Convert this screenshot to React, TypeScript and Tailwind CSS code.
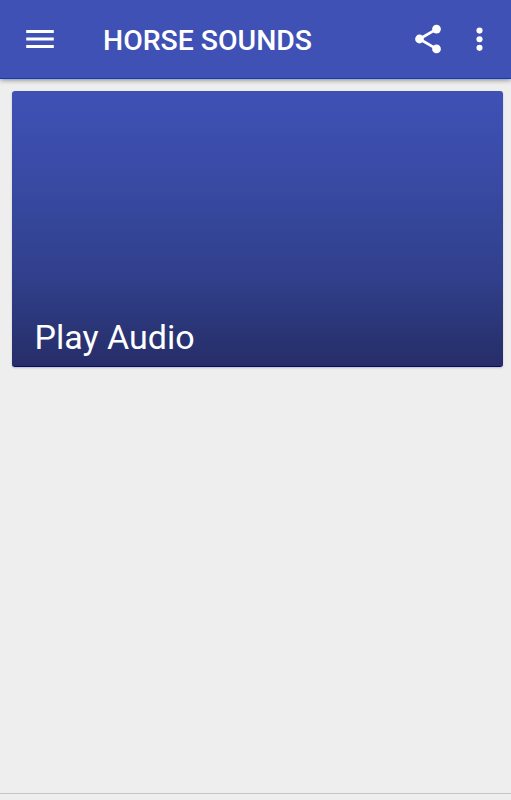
export default function App() {
  return (
    <div className="flex h-[800px] w-[511px] flex-col overflow-hidden bg-[#eeeeee] font-[Roboto,sans-serif] text-white">
      <header className="z-10 flex h-[79px] shrink-0 items-center border-b border-[#0f3bb5] bg-[#3f51b5] pl-[22px] pr-[14px] shadow-[0_1px_5px_rgba(0,0,0,0.45)]">
        <svg className="size-9 shrink-0" viewBox="0 0 24 24" fill="currentColor">
          <path d="M2.8 18h18.4v-2H2.8v2zm0-5h18.4v-2H2.8v2zm0-7v2h18.4V6H2.8z" />
        </svg>
        <h1 className="ml-[45px] flex-1 whitespace-nowrap pt-1 text-[28.4px] font-medium leading-9">HORSE SOUNDS</h1>
        <svg className="mr-[17px] size-[34px] shrink-0" viewBox="0 0 24 24" fill="currentColor">
          <path d="M6 12L18 5M6 12l12 7" stroke="currentColor" strokeWidth="1.9" />
          <circle cx="6" cy="12" r="3.1" />
          <circle cx="18" cy="5" r="3.1" />
          <circle cx="18" cy="19" r="3.1" />
        </svg>
        <svg className="size-[35px] shrink-0" viewBox="0 0 24 24" fill="currentColor">
          <circle cx="12" cy="5.9" r="2.1" />
          <circle cx="12" cy="11.8" r="2.1" />
          <circle cx="12" cy="17.7" r="2.1" />
        </svg>
      </header>
      <main className="flex-1 pl-[11.5px] pr-[8.5px] pt-[11.5px]">
        <section className="flex h-[276.5px] items-end rounded-[3px] border-b border-[#090966] bg-[linear-gradient(#3f51b5_0%,#3b4dab_20%,#35479b_45%,#313f8c_68%,#2b387b_82%,#272d69_100%)] pb-2 pl-[23px] shadow-[0_1px_2px_rgba(0,0,0,0.2)]">
          <h2 className="text-[34px] leading-[42px]">Play Audio</h2>
        </section>
      </main>
      <footer className="h-[7px] shrink-0 border-t border-[#c4c4c4]" />
    </div>
  );
}
